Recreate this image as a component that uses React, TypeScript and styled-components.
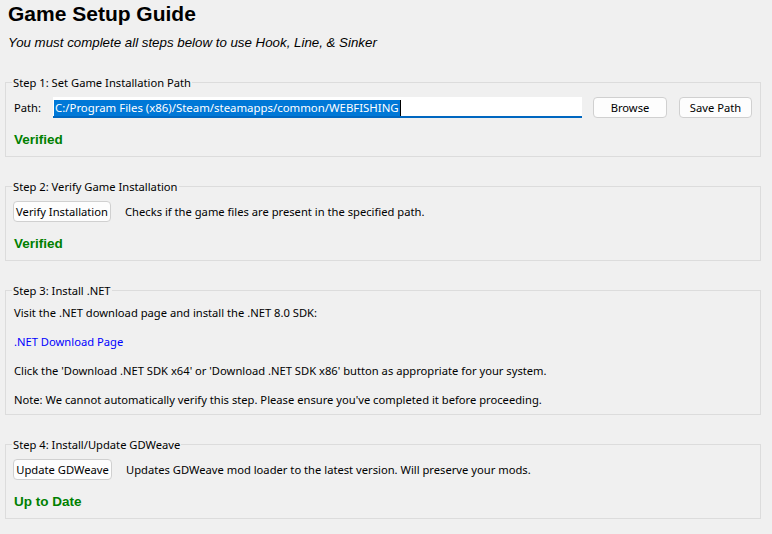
import React from "react";
import styled, { createGlobalStyle } from "styled-components";

const UI_FONT = `"Noto Sans", "Open Sans", sans-serif`;
const ARIAL = `"Liberation Sans", Arial, sans-serif`;
const UI_SIZE = "11.2px";

const GlobalStyle = createGlobalStyle`
  html, body { margin: 0; padding: 0; background: #f0f0f0; }
  body { font-family: ${UI_FONT}; font-size: ${UI_SIZE}; color: #000; }
`;

const Page = styled.div`
  width: 772px;
  height: 534px;
  overflow: hidden;
  box-sizing: border-box;
  padding-left: 5px;
  background: #f0f0f0;
`;

const Header = styled.header`
  padding-left: 3px;
`;

const Title = styled.h1`
  margin: 0;
  font-family: ${ARIAL};
  font-weight: 700;
  font-size: 21px;
  line-height: 28px;
`;

const Subtitle = styled.p`
  margin: 6px 0 0;
  font-family: ${ARIAL};
  font-style: italic;
  font-size: 13.3px;
  line-height: 18px;
`;

const Steps = styled.div`
  display: flex;
  flex-direction: column;
  gap: 21px;
  margin-top: 22px;
`;

const Group = styled.fieldset`
  width: 756px;
  box-sizing: border-box;
  margin: 0;
  min-inline-size: auto;
  border: 1px solid #dcdcdc;
  padding: 0 8px 0 7px;
`;

const Legend = styled.legend`
  margin-left: -1px;
  padding: 0 1px;
  height: 17px;
  line-height: 17px;
  font-size: ${UI_SIZE};
`;

const Body = styled.div<{ $pad: string }>`
  padding: ${(p) => p.$pad};
  display: flex;
  flex-direction: column;
`;

const Row = styled.div`
  display: flex;
  align-items: center;
  height: 21px;
  white-space: nowrap;
`;

const Label = styled.span`
  margin-left: 1px;
`;

const PathInput = styled.div`
  width: 529px;
  height: 21px;
  box-sizing: border-box;
  margin-left: 12px;
  padding: 2px 0 0 1px;
  background: #fff;
  border-bottom: 2px solid #0067c0;
  display: flex;
  align-items: center;
`;

const Selected = styled.span`
  background: #0078d7;
  color: #fff;
  font-size: 11.4px;
  line-height: 16px;
  padding: 0 1px;
  border-right: 1px solid #000;
`;

const Button = styled.button<{ $w: number; $ml?: number }>`
  width: ${(p) => p.$w}px;
  height: 21px;
  margin-left: ${(p) => p.$ml ?? 0}px;
  padding: 0;
  box-sizing: border-box;
  border: 1px solid #d0d0d0;
  border-radius: 4px;
  background: #fdfdfd;
  font-family: ${UI_FONT};
  font-size: ${UI_SIZE};
  color: #000;
  line-height: 19px;
  white-space: nowrap;
  flex-shrink: 0;
`;

const Desc = styled.span`
  margin-left: 14px;
`;

const Status = styled.div`
  margin-top: 12px;
  margin-left: 1px;
  height: 20px;
  line-height: 20px;
  font-family: ${ARIAL};
  font-weight: 700;
  font-size: 13.5px;
  color: #008000;
`;

const Lines = styled.div`
  display: flex;
  flex-direction: column;
  gap: 9px;
`;

const Line = styled.div`
  height: 20px;
  line-height: 20px;
  margin-left: 1px;
  white-space: nowrap;
`;

const Link = styled.a`
  color: #0000ff;
  text-decoration: none;
  cursor: pointer;
`;

export default function App() {
  return (
    <>
      <GlobalStyle />
      <Page>
        <Header>
          <Title>Game Setup Guide</Title>
          <Subtitle>You must complete all steps below to use Hook, Line, &amp; Sinker</Subtitle>
        </Header>
        <Steps>
          <Group>
            <Legend>Step 1: Set Game Installation Path</Legend>
            <Body $pad="6px 0 6px">
              <Row>
                <Label>Path:</Label>
                <PathInput>
                  <Selected>C:/Program Files (x86)/Steam/steamapps/common/WEBFISHING</Selected>
                </PathInput>
                <Button $w={74} $ml={11}>Browse</Button>
                <Button $w={73} $ml={12}>Save Path</Button>
              </Row>
              <Status>Verified</Status>
            </Body>
          </Group>

          <Group>
            <Legend>Step 2: Verify Game Installation</Legend>
            <Body $pad="6px 0 6px">
              <Row>
                <Button $w={98}>Verify Installation</Button>
                <Desc>Checks if the game files are present in the specified path.</Desc>
              </Row>
              <Status>Verified</Status>
            </Body>
          </Group>

          <Group>
            <Legend>Step 3: Install .NET</Legend>
            <Body $pad="4px 0 4px">
              <Lines>
                <Line>Visit the .NET download page and install the .NET 8.0 SDK:</Line>
                <Line>
                  <Link>.NET Download Page</Link>
                </Line>
                <Line>
                  Click the 'Download .NET SDK x64' or 'Download .NET SDK x86' button as appropriate for your system.
                </Line>
                <Line>
                  Note: We cannot automatically verify this step. Please ensure you've completed it before proceeding.
                </Line>
              </Lines>
            </Body>
          </Group>

          <Group>
            <Legend>Step 4: Install/Update GDWeave</Legend>
            <Body $pad="6px 0 6px">
              <Row>
                <Button $w={99}>Update GDWeave</Button>
                <Desc>Updates GDWeave mod loader to the latest version. Will preserve your mods.</Desc>
              </Row>
              <Status>Up to Date</Status>
            </Body>
          </Group>
        </Steps>
      </Page>
    </>
  );
}
